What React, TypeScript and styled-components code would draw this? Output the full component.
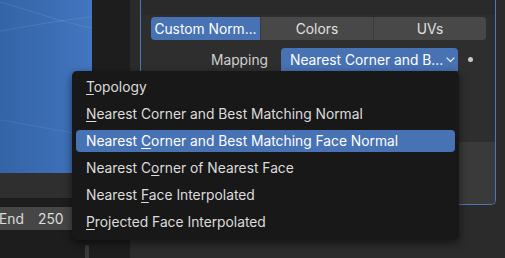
import React from "react";
import styled, { createGlobalStyle } from "styled-components";

const Global = createGlobalStyle`
  html, body { margin: 0; padding: 0; background: #1d1d1d; }
  body { font-family: Inter, "Noto Sans", sans-serif; }
  * { box-sizing: border-box; }
`;

const Screen = styled.div`
  position: relative;
  width: 505px;
  height: 258px;
  overflow: hidden;
  display: grid;
  grid-template-columns: 92px 38px 1fr;
  background: #1d1d1d;
  font-family: Inter, "Noto Sans", sans-serif;
  font-size: 13.8px;
`;

const LeftColumn = styled.div`
  display: flex;
  flex-direction: column;
`;

const Viewport = styled.div`
  position: relative;
  height: 173px;
  background: linear-gradient(90deg, #3464a7 0%, #3b6db4 55%, #4276bf 100%);
`;

const ViewportLines = styled.svg`
  display: block;
  width: 92px;
  height: 173px;
`;

const Strip = styled.div`
  height: 25px;
  background: #2f2f2f;
`;

const Divider = styled.div`
  height: 9px;
  background: #1d1d1d;
`;

const FieldRow = styled.div`
  height: 23px;
  background: #464646;
  display: flex;
  align-items: center;
  color: #dcdcdc;
  white-space: nowrap;
`;

const FieldLabel = styled.span`
  margin-left: -1px;
  width: 39px;
`;

const FieldValue = styled.span``;

const LeftBottom = styled.div`
  flex: 1;
  background: #1d1d1d;
  display: flex;
  justify-content: flex-end;
  align-items: flex-end;
  padding-right: 3px;
`;

const ScrollNub = styled.div`
  width: 4px;
  height: 13px;
  border-radius: 2px 2px 0 0;
  background: #3a3a3a;
`;

const Gutter = styled.div`
  background: #1d1d1d;
`;

const Properties = styled.div`
  background: #2b2b2b;
  padding: 0 11px 0 10px;
`;

const Panel = styled.div`
  height: 205px;
  background: #2e2e2e;
  border: 1px solid #4d78b8;
  border-top: none;
  border-radius: 0 0 5px 5px;
  display: flex;
  flex-direction: column;
  overflow: hidden;
`;

const PanelTop = styled.div`
  height: 15px;
  background: #2a2a2a;
`;

const PanelBody = styled.div`
  padding: 2px 9px 0 10px;
  display: flex;
  flex-direction: column;
  gap: 8px;
`;

const Tabs = styled.div`
  display: grid;
  grid-template-columns: 109px 112px 112px;
  height: 23px;
  border-radius: 4px;
  overflow: hidden;
  background: #3a3a3a;
  gap: 1px;
`;

const Tab = styled.div<{ $active?: boolean }>`
  display: flex;
  align-items: center;
  justify-content: center;
  background: ${(p) => (p.$active ? "#4772b3" : "#484848")};
  color: ${(p) => (p.$active ? "#ffffff" : "#e0e0e0")};
  white-space: nowrap;
  overflow: hidden;
`;

const MappingRow = styled.div`
  display: grid;
  grid-template-columns: 130px 177px 26px;
  height: 23px;
  align-items: center;
`;

const RowLabel = styled.div`
  text-align: right;
  padding-right: 13px;
  color: #d0d0d0;
`;

const Dropdown = styled.div`
  height: 23px;
  background: #4772b3;
  border-radius: 4px 4px 0 0;
  display: flex;
  align-items: center;
  justify-content: space-between;
  padding: 0 3px 0 9px;
  color: #ffffff;
  white-space: nowrap;
`;

const Decorator = styled.div`
  display: flex;
  justify-content: center;
  align-items: center;
  padding-right: 1px;
`;

const Dot = styled.div`
  width: 5px;
  height: 5px;
  border-radius: 50%;
  background: #c8c8c8;
`;

const PanelFoot = styled.div`
  margin-top: auto;
  height: 62px;
  background: #3a3a3a;
`;

const Menu = styled.div`
  position: absolute;
  left: 72px;
  top: 71px;
  width: 387px;
  padding: 5px 4px 7px;
  display: flex;
  flex-direction: column;
  gap: 5px;
  background: #181818;
  border-radius: 5px;
  box-shadow: 0 3px 8px rgba(0, 0, 0, 0.55);
`;

const MenuItem = styled.div<{ $active?: boolean }>`
  height: 22px;
  display: flex;
  align-items: center;
  padding-left: 10px;
  border-radius: 4px;
  background: ${(p) => (p.$active ? "#4772b3" : "transparent")};
  color: ${(p) => (p.$active ? "#ffffff" : "#dcdcdc")};
  white-space: pre;

  u {
    text-decoration-thickness: 1px;
    text-underline-offset: 2px;
  }
`;

const Chevron = () => (
  <svg width="9" height="6" viewBox="0 0 9 6">
    <path d="M1 1 L4.5 4.5 L8 1" stroke="#e8e8e8" strokeWidth="1.2" fill="none" strokeLinecap="round" strokeLinejoin="round" />
  </svg>
);

const items: { pre: string; key: string; post: string; active?: boolean }[] = [
  { pre: "", key: "T", post: "opology" },
  { pre: "", key: "N", post: "earest Corner and Best Matching Normal" },
  { pre: "Nearest ", key: "C", post: "orner and Best Matching Face Normal", active: true },
  { pre: "Nearest C", key: "o", post: "rner of Nearest Face" },
  { pre: "Nearest ", key: "F", post: "ace Interpolated" },
  { pre: "", key: "P", post: "rojected Face Interpolated" },
];

export default function App() {
  return (
    <>
      <Global />
      <Screen>
        <LeftColumn>
          <Viewport>
            <ViewportLines viewBox="0 0 92 173">
              <path d="M0 2 C 30 10, 60 22, 92 28" stroke="rgba(255,255,255,0.10)" strokeWidth="1" fill="none" />
              <path d="M0 31 C 30 26, 60 20, 92 17" stroke="rgba(255,255,255,0.10)" strokeWidth="1" fill="none" />
              <path d="M0 120 C 25 124, 50 129, 80 134" stroke="rgba(255,255,255,0.08)" strokeWidth="1" fill="none" />
            </ViewportLines>
          </Viewport>
          <Strip />
          <Divider />
          <FieldRow>
            <FieldLabel>End</FieldLabel>
            <FieldValue>250</FieldValue>
          </FieldRow>
          <LeftBottom>
            <ScrollNub />
          </LeftBottom>
        </LeftColumn>
        <Gutter />
        <Properties>
          <Panel>
            <PanelTop />
            <PanelBody>
              <Tabs>
                <Tab $active>Custom Norm...</Tab>
                <Tab>Colors</Tab>
                <Tab>UVs</Tab>
              </Tabs>
              <MappingRow>
                <RowLabel>Mapping</RowLabel>
                <Dropdown>
                  <span>Nearest Corner and B...</span>
                  <Chevron />
                </Dropdown>
                <Decorator>
                  <Dot />
                </Decorator>
              </MappingRow>
            </PanelBody>
            <PanelFoot />
          </Panel>
        </Properties>
        <Menu>
          {items.map((it, i) => (
            <MenuItem key={i} $active={it.active}>
              <span>
                {it.pre}
                <u>{it.key}</u>
                {it.post}
              </span>
            </MenuItem>
          ))}
        </Menu>
      </Screen>
    </>
  );
}
